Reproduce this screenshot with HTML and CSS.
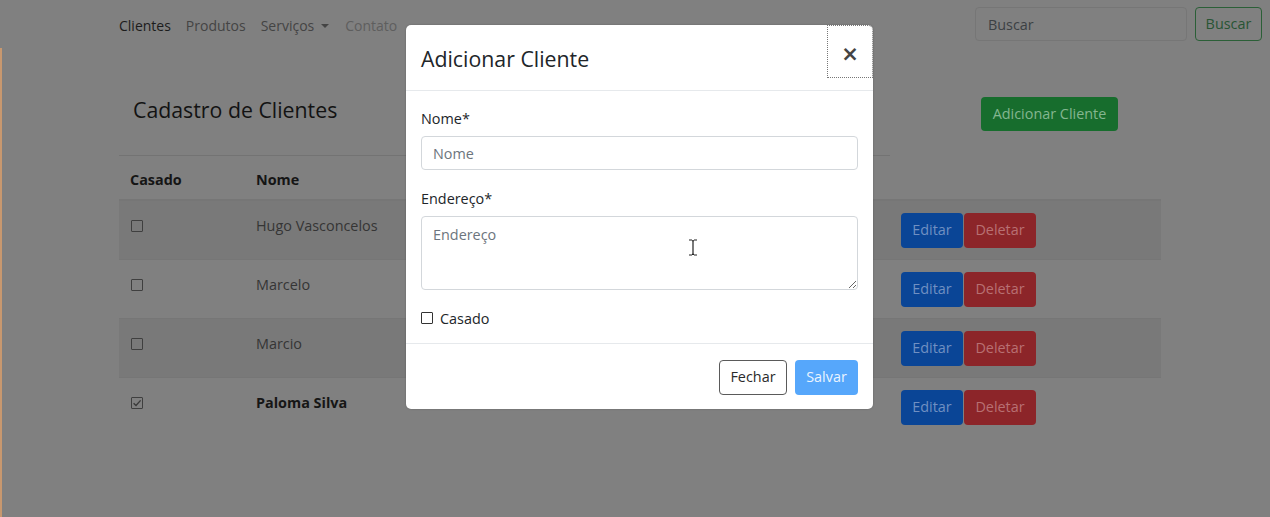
FILE: index.html
```html
<!DOCTYPE html>
<html lang="pt-BR">
<head>
<meta charset="utf-8">
<title>Cadastro de Clientes</title>
<link rel="stylesheet" href="styles.css">
</head>
<body>
<nav class="navbar">
  <ul class="nav-links">
    <li class="nav-item active">Clientes</li>
    <li class="nav-item">Produtos</li>
    <li class="nav-item">Serviços<span class="caret"></span></li>
    <li class="nav-item disabled">Contato</li>
  </ul>
  <form class="search">
    <input class="search-input" placeholder="Buscar">
    <button type="button" class="btn btn-outline-success">Buscar</button>
  </form>
</nav>
<main class="page">
  <div class="title-row">
    <div class="title-col">
      <h2 class="page-title">Cadastro de Clientes</h2>
      <hr class="divider">
    </div>
    <div class="action-col"><button type="button" class="btn btn-success">Adicionar Cliente</button></div>
  </div>
  <table class="clients">
    <thead>
      <tr><th class="c-check">Casado</th><th class="c-name">Nome</th><th class="c-addr"></th><th class="c-actions"></th></tr>
    </thead>
    <tbody>
      <tr class="striped">
        <td><span class="tbox"></span></td><td>Hugo Vasconcelos</td><td></td>
        <td><button type="button" class="btn btn-edit">Editar</button><button type="button" class="btn btn-del">Deletar</button></td>
      </tr>
      <tr>
        <td><span class="tbox"></span></td><td>Marcelo</td><td></td>
        <td><button type="button" class="btn btn-edit">Editar</button><button type="button" class="btn btn-del">Deletar</button></td>
      </tr>
      <tr class="striped">
        <td><span class="tbox"></span></td><td>Marcio</td><td></td>
        <td><button type="button" class="btn btn-edit">Editar</button><button type="button" class="btn btn-del">Deletar</button></td>
      </tr>
      <tr>
        <td><span class="tbox checked"><svg viewBox="0 0 12 12" width="12" height="12"><path d="M2.6 6.2 L5 8.4 L9.6 3.4" fill="none" stroke="#3a3a3a" stroke-width="1.4"/></svg></span></td><td class="bold">Paloma Silva</td><td></td>
        <td><button type="button" class="btn btn-edit">Editar</button><button type="button" class="btn btn-del">Deletar</button></td>
      </tr>
    </tbody>
  </table>
</main>

<div class="modal">
  <div class="modal-header">
    <h5 class="modal-title">Adicionar Cliente</h5>
    <button type="button" class="close">×</button>
  </div>
  <div class="modal-body">
    <div class="form-group">
      <label class="label">Nome*</label>
      <input class="form-control" placeholder="Nome">
    </div>
    <div class="form-group">
      <label class="label">Endereço*</label>
      <textarea class="form-control area" placeholder="Endereço"></textarea>
    </div>
    <div class="check-row"><span class="mbox"></span><span>Casado</span></div>
  </div>
  <div class="modal-footer">
    <button type="button" class="btn btn-close">Fechar</button>
    <button type="button" class="btn btn-save">Salvar</button>
  </div>
</div>

<svg class="ibeam" width="10" height="17" viewBox="0 0 10 17"><path d="M1 1 H4 M6 1 H9 M4 1.5 Q5 1.5 5 3 V14 Q5 15.5 4 15.5 M6 1.5 Q5 1.5 5 3 M5 14 Q5 15.5 6 15.5 M1 16 H4 M6 16 H9" fill="none" stroke="#222" stroke-width="1.2"/></svg>
</body>
</html>
```
FILE: styles.css
```css
* { box-sizing: border-box; }
html, body { margin: 0; height: 100%; }
body {
  background: #808080;
  font-family: "Open Sans", "Noto Sans", sans-serif;
  font-size: 14.4px;
  color: #141516;
  position: relative;
  overflow: hidden;
}

/* navbar */
.navbar {
  display: flex;
  align-items: center;
  justify-content: space-between;
  height: 48px;
  padding: 7px 8px 7px 119px;
}
.nav-links {
  display: flex;
  gap: 15px;
  list-style: none;
  margin: 0;
  padding: 3px 0 0;
  font-size: 14px;
}
.nav-item { color: #444; line-height: 20px; }
.nav-item.active { color: #1c1c1c; }
.nav-item.disabled { color: #5e5e5e; margin-left: 1px; }
.caret {
  display: inline-block;
  margin-left: 7px;
  vertical-align: 3px;
  border-top: 4px solid #444;
  border-left: 4px solid transparent;
  border-right: 4px solid transparent;
}
.search { display: flex; gap: 8px; }
.search-input {
  width: 212px;
  height: 34px;
  border: 1px solid #767676;
  border-radius: 4px;
  background: #808080;
  padding: 0 12px;
  font: inherit;
  color: #3a3d40;
}
.search-input::placeholder { color: #3c4044; }

.btn {
  font: inherit;
  border-radius: 4px;
  height: 35px;
  padding: 0 12px;
  border: 1px solid transparent;
  line-height: 1;
}
.btn-outline-success {
  height: 34px;
  width: 67px;
  padding: 0;
  background: transparent;
  border-color: #2b5f37;
  color: #285534;
}

/* page */
.page {
  border-left: 2px solid #c8986f;
  height: calc(100% - 48px);
  padding: 45px 0 0 117px;
}
.title-row { display: flex; width: 1042px; }
.title-col { width: 771px; }
.page-title {
  margin: 0;
  padding-left: 14px;
  font-size: 21.3px;
  font-weight: 400;
  line-height: 34px;
  color: #131313;
}
.divider { margin: 28px 0 0; border: 0; border-top: 1px solid #737373; }
.action-col { margin-left: 91px; padding-top: 4px; }
.btn-success {
  background: #176d2d;
  color: #84b690;
  width: 137px;
  height: 34px;
  padding: 0;
}

/* table */
.clients { width: 1042px; border-collapse: collapse; }
.clients th {
  text-align: left;
  font-weight: 700;
  padding: 14px 11px 9px;
  line-height: 20px;
  border-bottom: 2px solid #767676;
  color: #151515;
}
.c-check { width: 126px; }
.c-name { width: 300px; }
.c-actions { width: 272px; }
.clients td {
  border-top: 1px solid #767676;
  padding: 12px 11px 11px;
  vertical-align: top;
  line-height: 26px;
  color: #353535;
}
.clients td:last-child { padding-left: 12px; line-height: 24px; }
.clients tr.striped td { background: #797979; }
.clients td.bold { font-weight: 700; color: #161616; }
.tbox {
  display: block;
  width: 12px;
  height: 12px;
  margin: 7px 0 0 1px;
  border: 1.5px solid #3f3f3f;
  border-radius: 1px;
  position: relative;
}
.tbox svg { position: absolute; left: -1.5px; top: -1.5px; }
.btn-edit {
  width: 62px;
  padding: 0;
  background: #0a4596;
  color: #7090c2;
  margin-right: 1px;
}
.btn-del {
  width: 72px;
  padding: 0;
  background: #8c2529;
  color: #b87073;
}

/* modal */
.modal {
  position: absolute;
  left: 406px;
  top: 25px;
  width: 467px;
  background: #fff;
  border-radius: 5px;
  box-shadow: 0 0 2px rgba(0, 0, 0, .25);
  color: #212529;
}
.modal-header {
  display: flex;
  justify-content: space-between;
  align-items: flex-start;
  height: 66px;
  border-bottom: 1px solid #e6e9ec;
}
.modal-title {
  margin: 0;
  padding: 18px 0 0 15px;
  font-size: 21.3px;
  font-weight: 400;
  line-height: 32px;
}
.close {
  width: 46px;
  height: 53px;
  padding: 4px 0 0;
  border: 1px dotted #777;
  border-radius: 0 5px 0 0;
  background: transparent;
  font-family: "DejaVu Sans", sans-serif;
  font-size: 21px;
  font-weight: 700;
  color: #444;
}
.modal-body { padding: 17px 15px 14px; }
.form-group { margin-bottom: 18px; }
.label { display: block; line-height: 21px; margin-bottom: 7px; }
.form-control {
  display: block;
  width: 100%;
  height: 34px;
  border: 1px solid #d3d7db;
  border-radius: 4px;
  padding: 0 11px;
  font: inherit;
  color: #495057;
}
.form-control::placeholder { color: #6c757d; }
.area { height: 74px; padding: 8px 11px; resize: vertical; }
.check-row { display: flex; align-items: center; gap: 7px; line-height: 21px; }
.mbox {
  width: 12px;
  height: 12px;
  border: 1.5px solid #333;
  border-radius: 1px;
  margin-top: -1px;
}
.modal-footer {
  display: flex;
  justify-content: flex-end;
  gap: 8px;
  padding: 16px 15px 14px;
  border-top: 1px solid #e6e9ec;
}
.btn-close {
  width: 68px;
  padding: 0;
  background: #fff;
  border-color: #5a5a5a;
  color: #2a2a2a;
}
.btn-save {
  width: 63px;
  padding: 0;
  background: #56a7fb;
  color: #eaf4ff;
}

.ibeam { position: absolute; left: 688px; top: 239px; }
```
